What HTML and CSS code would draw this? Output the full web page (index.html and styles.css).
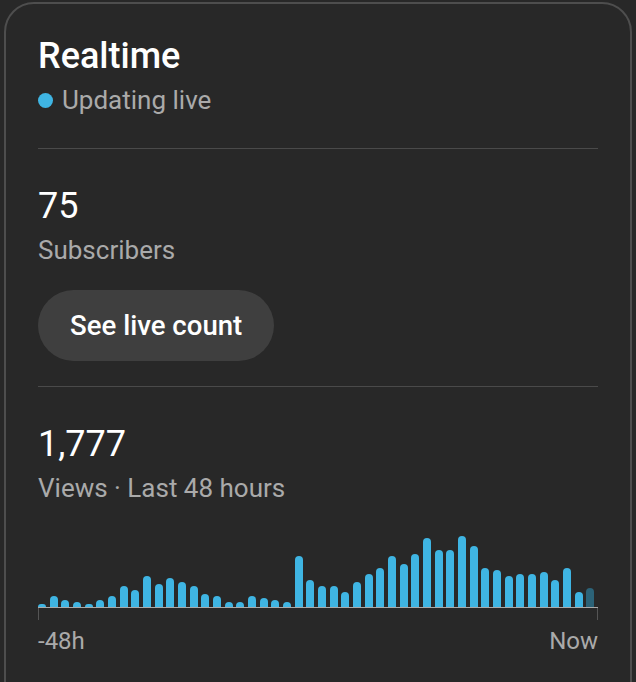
FILE: index.html
```html
<!DOCTYPE html>
<html lang="en">
<head>
    <meta charset="UTF-8">
    <meta name="viewport" content="width=device-width, initial-scale=1.0">
    <title>Realtime</title>
    <link rel="stylesheet" href="styles.css">
</head>
<body>
    <div class="card">
        <h2 class="title">Realtime</h2>
        <div class="live">
            <span class="dot"></span>
            <span>Updating live</span>
        </div>

        <div class="divider"></div>

        <div class="stat-value">75</div>
        <div class="stat-label">Subscribers</div>
        <button class="pill-button">See live count</button>

        <div class="divider divider-short"></div>

        <div class="stat-value">1,777</div>
        <div class="stat-label">Views · Last 48 hours</div>

        <div class="chart">
            <div class="bars">
                <div class="bar" style="height:3px"></div>
                <div class="bar" style="height:11px"></div>
                <div class="bar" style="height:7px"></div>
                <div class="bar" style="height:5px"></div>
                <div class="bar" style="height:3px"></div>
                <div class="bar" style="height:7px"></div>
                <div class="bar" style="height:11px"></div>
                <div class="bar" style="height:21px"></div>
                <div class="bar" style="height:17px"></div>
                <div class="bar" style="height:31px"></div>
                <div class="bar" style="height:23px"></div>
                <div class="bar" style="height:29px"></div>
                <div class="bar" style="height:25px"></div>
                <div class="bar" style="height:21px"></div>
                <div class="bar" style="height:13px"></div>
                <div class="bar" style="height:11px"></div>
                <div class="bar" style="height:5px"></div>
                <div class="bar" style="height:5px"></div>
                <div class="bar" style="height:11px"></div>
                <div class="bar" style="height:9px"></div>
                <div class="bar" style="height:7px"></div>
                <div class="bar" style="height:5px"></div>
                <div class="bar" style="height:51px"></div>
                <div class="bar" style="height:27px"></div>
                <div class="bar" style="height:21px"></div>
                <div class="bar" style="height:21px"></div>
                <div class="bar" style="height:15px"></div>
                <div class="bar" style="height:25px"></div>
                <div class="bar" style="height:33px"></div>
                <div class="bar" style="height:39px"></div>
                <div class="bar" style="height:51px"></div>
                <div class="bar" style="height:43px"></div>
                <div class="bar" style="height:53px"></div>
                <div class="bar" style="height:69px"></div>
                <div class="bar" style="height:57px"></div>
                <div class="bar" style="height:57px"></div>
                <div class="bar" style="height:71px"></div>
                <div class="bar" style="height:61px"></div>
                <div class="bar" style="height:39px"></div>
                <div class="bar" style="height:37px"></div>
                <div class="bar" style="height:31px"></div>
                <div class="bar" style="height:33px"></div>
                <div class="bar" style="height:33px"></div>
                <div class="bar" style="height:35px"></div>
                <div class="bar" style="height:27px"></div>
                <div class="bar" style="height:39px"></div>
                <div class="bar" style="height:15px"></div>
                <div class="bar bar-current" style="height:19px"></div>
            </div>
            <div class="ticks"></div>
            <div class="axis-labels">
                <span>-48h</span>
                <span>Now</span>
            </div>
        </div>
    </div>
</body>
</html>
```

FILE: styles.css
```css
html, body {
    height: 100%;
    overflow: hidden;
}
body {
    margin: 0;
    background-color: #282828;
    font-family: Roboto, "Noto Sans", Arial, sans-serif;
    color: #fff;
}
.card {
    margin: 2px 4px 0 4px;
    min-height: 760px;
    padding: 30px 32px 40px;
    border: 2px solid #4e4e4e;
    border-radius: 30px;
    background-color: #282828;
}
.title {
    margin: 0;
    font-size: 36px;
    line-height: 44px;
    font-weight: 500;
}
.live {
    display: flex;
    align-items: center;
    gap: 9px;
    margin-top: 6px;
    font-size: 26px;
    line-height: 32px;
    color: #aaa;
}
.dot {
    width: 15px;
    height: 15px;
    border-radius: 50%;
    background-color: #3fb5e3;
}
.divider {
    height: 1px;
    margin: 32px 0 36px;
    background-color: #4a4a4a;
}
.divider-short {
    margin-top: 25px;
}
.stat-value {
    font-size: 36px;
    line-height: 42px;
}
.stat-label {
    margin-top: 7px;
    font-size: 26px;
    line-height: 32px;
    color: #aaa;
}
.pill-button {
    display: block;
    margin-top: 24px;
    height: 71px;
    padding: 0 32px;
    border: none;
    border-radius: 36px;
    background-color: #3f3f3f;
    color: #fff;
    font-family: inherit;
    font-size: 27.6px;
    font-weight: 500;
    cursor: pointer;
}
.chart {
    margin-top: 23px;
}
.bars {
    display: grid;
    grid-template-columns: repeat(48, 1fr);
    align-items: end;
    height: 80px;
    border-bottom: 1px solid #aaa;
}
.bar {
    width: 8px;
    border-radius: 4px 4px 0 0;
    background-color: #3fb5e3;
}
.bar-current {
    background-color: #2c6378;
}
.ticks {
    height: 12px;
    border-left: 1px solid #555;
    border-right: 1px solid #555;
}
.axis-labels {
    display: flex;
    justify-content: space-between;
    margin-top: 7px;
    font-size: 24px;
    line-height: 28px;
    color: #aaa;
}
```
